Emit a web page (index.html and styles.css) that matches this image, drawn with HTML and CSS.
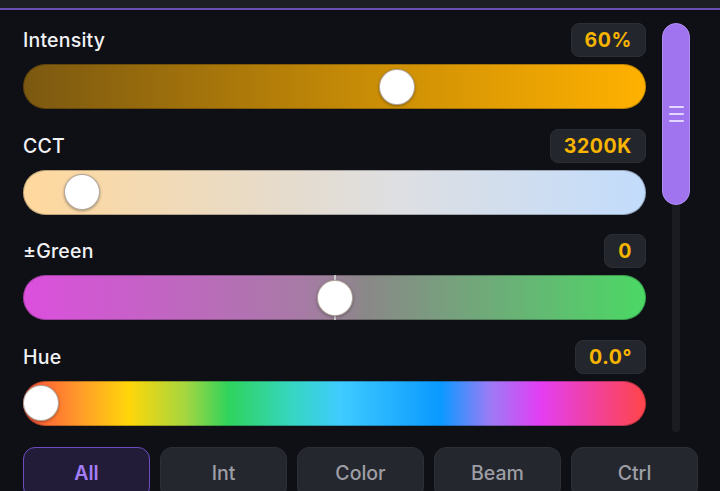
FILE: index.html
```html
<!DOCTYPE html>
<html lang="en">
<head>
<meta charset="utf-8">
<title>Light Controls</title>
<link rel="stylesheet" href="styles.css">
</head>
<body>
<div class="topbar"></div>
<div class="main">
  <div class="controls">
    <div class="row">
      <div class="head"><span class="label">Intensity</span><span class="pill">60%</span></div>
      <div class="track t-int"><div class="thumb" style="--p:0.606"></div></div>
    </div>
    <div class="row">
      <div class="head"><span class="label">CCT</span><span class="pill">3200K</span></div>
      <div class="track t-cct"><div class="thumb" style="--p:0.07"></div></div>
    </div>
    <div class="row">
      <div class="head"><span class="label">±Green</span><span class="pill">0</span></div>
      <div class="track t-green"><div class="mark"></div><div class="thumb" style="--p:0.5"></div></div>
    </div>
    <div class="row">
      <div class="head"><span class="label">Hue</span><span class="pill">0.0°</span></div>
      <div class="track t-hue"><div class="thumb" style="--p:0"></div></div>
    </div>
  </div>
  <div class="scroll">
    <div class="scroll-thumb"><span></span><span></span><span></span></div>
    <div class="scroll-track"></div>
  </div>
</div>
<div class="tabs">
  <div class="tab active">All</div>
  <div class="tab">Int</div>
  <div class="tab">Color</div>
  <div class="tab">Beam</div>
  <div class="tab">Ctrl</div>
</div>
</body>
</html>
```
FILE: styles.css
```css
* { box-sizing: border-box; }
html, body { margin: 0; padding: 0; }
body {
  width: 720px;
  height: 491px;
  overflow: hidden;
  background: #0f1015;
  font-family: Inter, "Noto Sans", sans-serif;
  color: #f2f2f5;
}
.topbar {
  height: 10px;
  background: #1d1e23;
  border-bottom: 2px solid #6a4fb3;
}
.main {
  display: flex;
  padding: 13px 0 0 23px;
}
.controls {
  width: 623px;
  display: flex;
  flex-direction: column;
  gap: 19.5px;
}
.row {
  display: flex;
  flex-direction: column;
  gap: 7px;
}
.head {
  height: 34px;
  display: flex;
  align-items: center;
  justify-content: space-between;
}
.label {
  font-size: 19.5px;
  font-weight: 500;
  letter-spacing: 0.2px;
}
.pill {
  height: 34px;
  min-width: 40px;
  padding: 0 13px;
  border-radius: 8px;
  background: #24262d;
  border: 1px solid #2c2e35;
  color: #f7b500;
  font-size: 19.5px;
  font-weight: 700;
  display: flex;
  align-items: center;
  justify-content: center;
  letter-spacing: 0.6px;
}
.track {
  position: relative;
  height: 45px;
  border-radius: 23px;
  box-shadow: inset 0 0 0 1px rgba(0,0,0,0.25);
}
.t-int { background: linear-gradient(to right, #7b5811, #c88c06 55%, #ffb100); }
.t-cct { background: linear-gradient(to right, #ffd89c, #e4dcd0 45%, #dedfe2 60%, #c2dcfc); }
.t-green { background: linear-gradient(to right, #dc4fde, #a77ba6 45%, #8a8888 55%, #4bd865); }
.t-hue {
  background: linear-gradient(to right, #ff4d3a 0%, #ff9a2a 9%, #ffd60a 17%, #a6d640 26%, #2fd35c 33%, #36d6c0 43%, #3fcbff 51%, #0a99ff 67%, #9c7bf5 75%, #e33ef4 83%, #ff4549 100%);
}
.thumb {
  position: absolute;
  top: 4.5px;
  left: calc(var(--p) * (100% - 36px));
  width: 36px;
  height: 36px;
  border-radius: 50%;
  background: #ffffff;
  border: 1px solid rgba(120,100,80,0.55);
  box-shadow: 0 1px 3px rgba(0,0,0,0.35);
}
.mark {
  position: absolute;
  left: 50%;
  top: 0;
  bottom: 0;
  width: 2px;
  margin-left: -1px;
  background: #d8d8d8;
  opacity: 0.8;
}
.scroll {
  position: relative;
  margin-left: 16px;
  width: 28px;
  height: 409px;
}
.scroll-track {
  position: absolute;
  left: 10px;
  top: 0;
  width: 8px;
  height: 409px;
  border-radius: 4px;
  background: #1b1c22;
  z-index: 0;
}
.scroll-thumb {
  position: relative;
  z-index: 1;
  width: 28px;
  height: 182px;
  border-radius: 14px;
  background: #a074ef;
  border: 1px solid #b38ef5;
  display: flex;
  flex-direction: column;
  align-items: center;
  justify-content: center;
  gap: 5px;
}
.scroll-thumb span {
  width: 15px;
  height: 2px;
  border-radius: 1px;
  background: #e3d6ff;
}
.tabs {
  display: grid;
  grid-template-columns: repeat(5, 127px);
  gap: 10px;
  padding: 15px 0 0 23px;
}
.tab {
  height: 52px;
  border-radius: 12px;
  background: #25272e;
  border: 1px solid #2d2f37;
  color: #9d9ea5;
  font-size: 19.5px;
  font-weight: 500;
  display: flex;
  align-items: center;
  justify-content: center;
}
.tab.active {
  background: #221c38;
  border: 1.5px solid #6b4dc0;
  color: #a47ef6;
  font-weight: 600;
}
```
